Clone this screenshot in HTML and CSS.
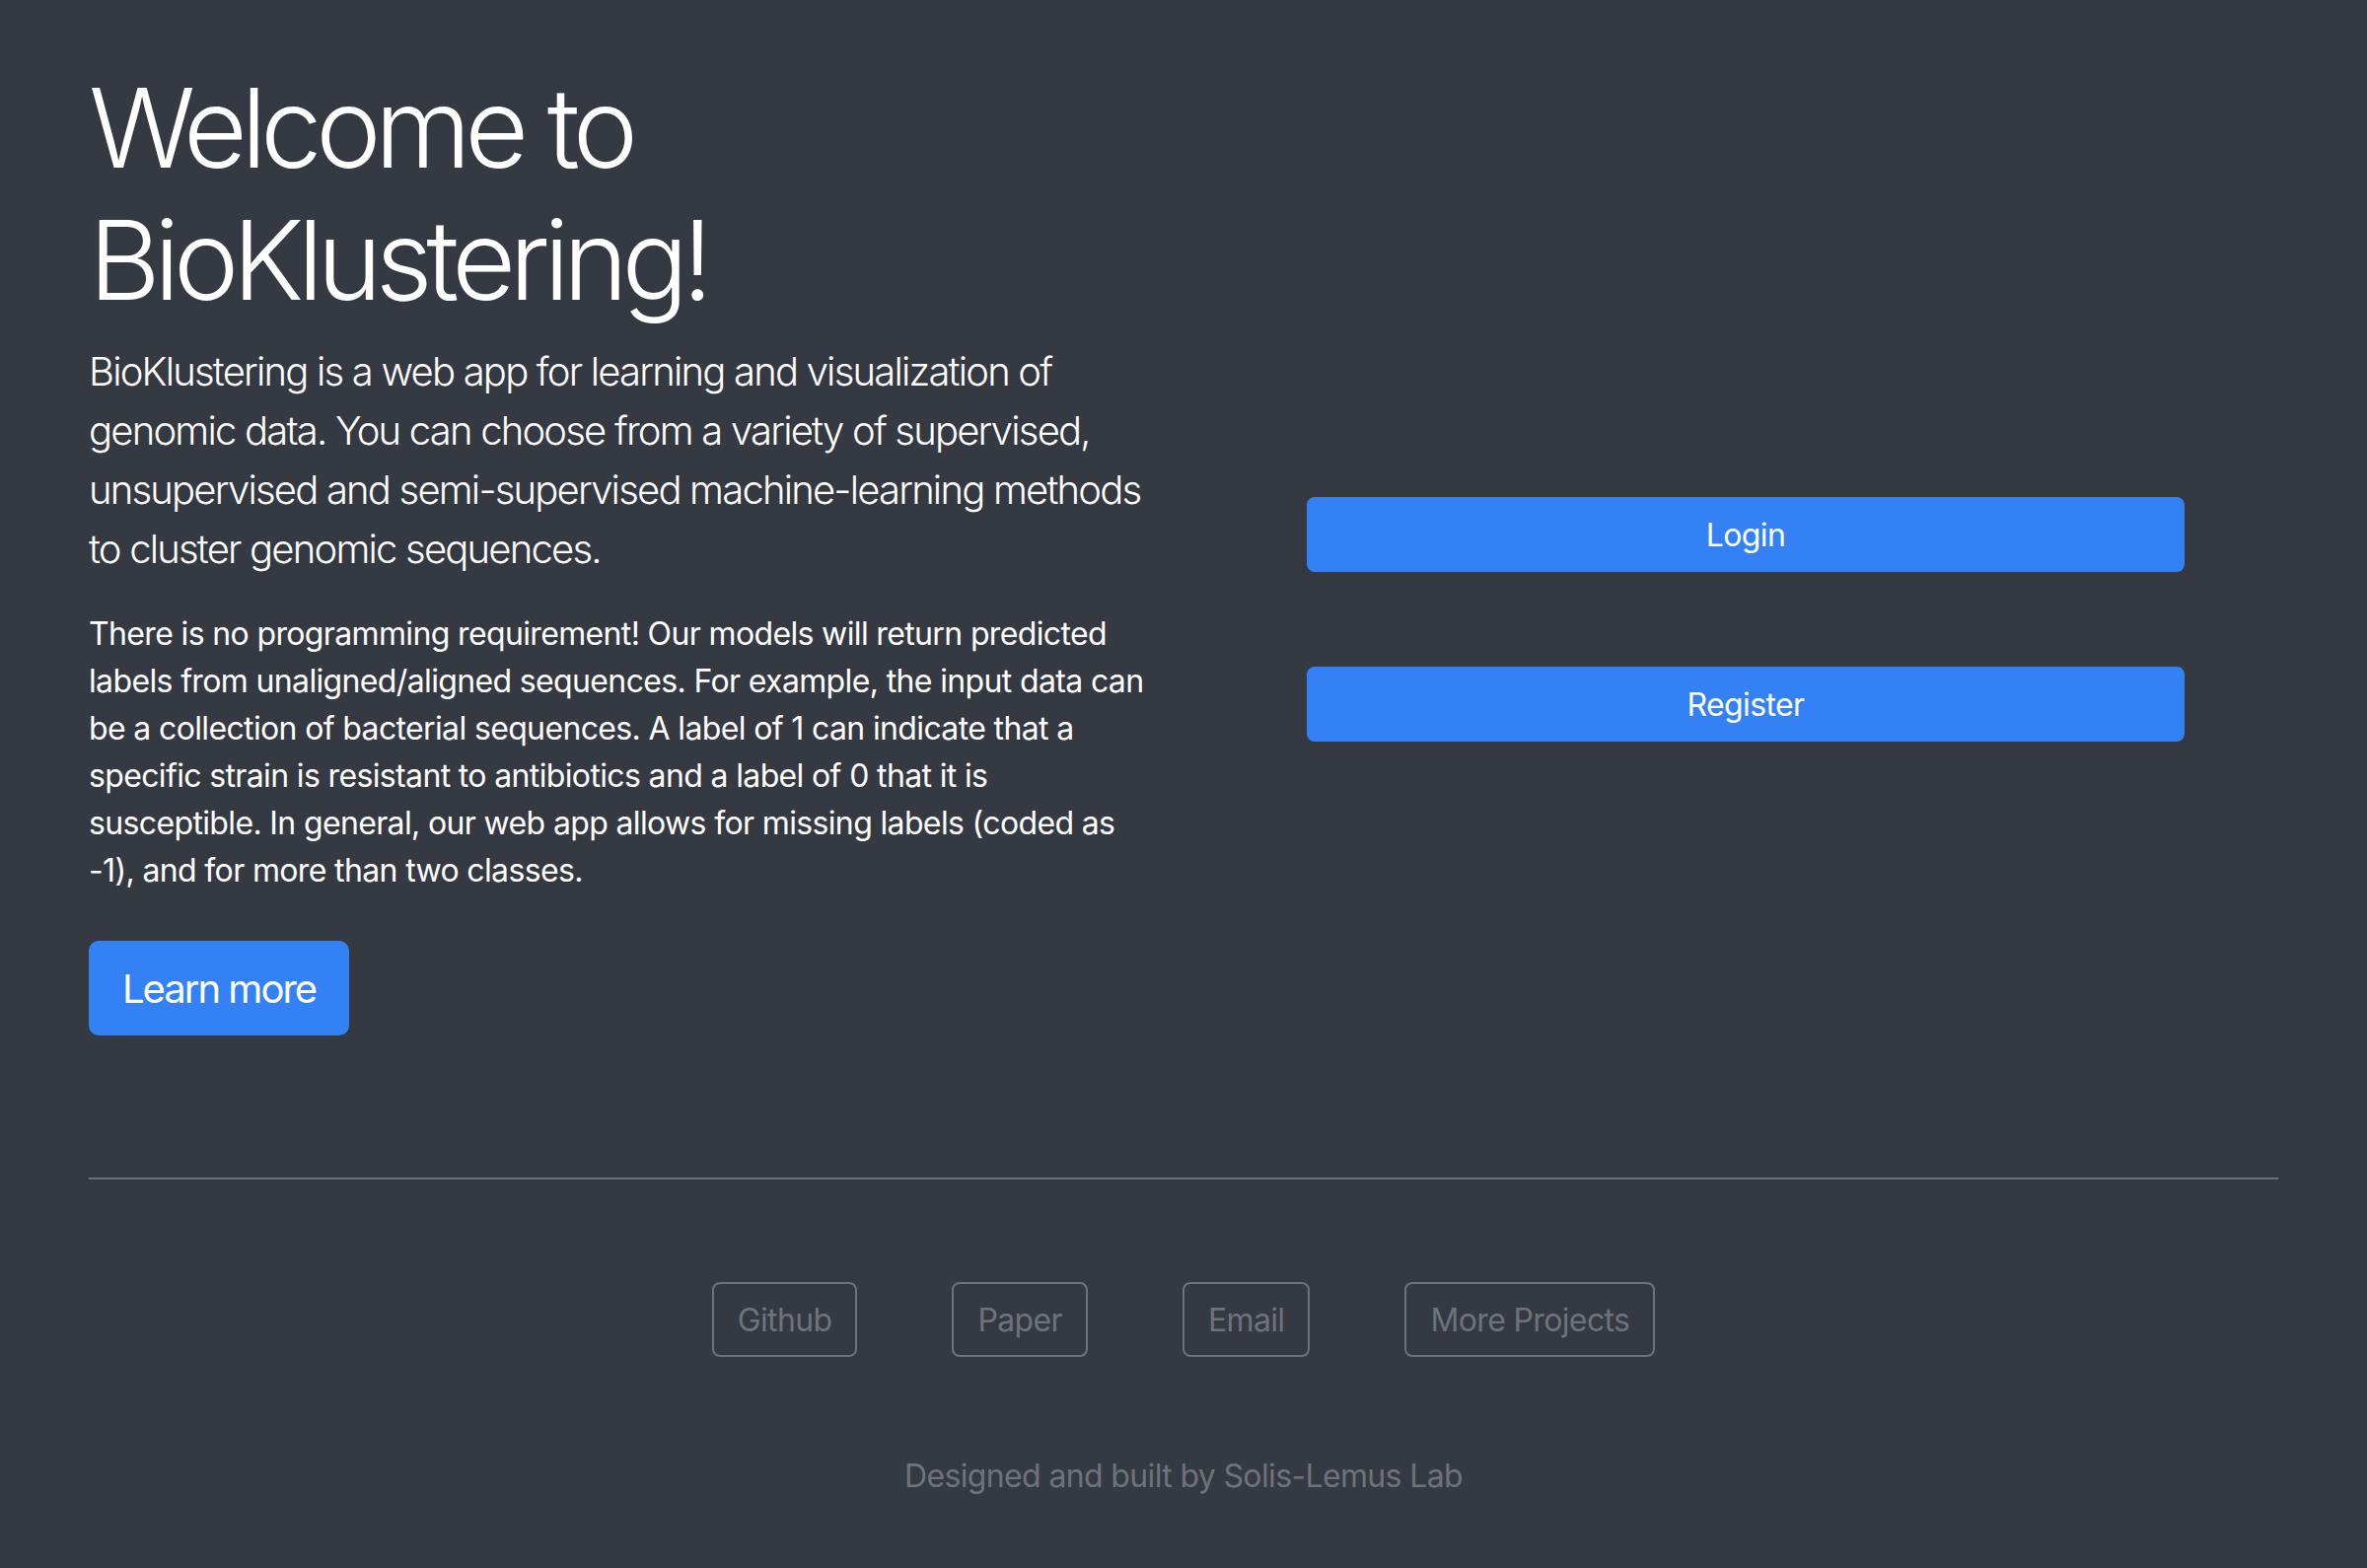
FILE: index.html
```html
<!DOCTYPE html>
<html lang="en">
<head>
<meta charset="utf-8">
<title>BioKlustering</title>
<link rel="stylesheet" href="styles.css">
</head>
<body>
<div class="container">
  <div class="hero">
    <div class="intro">
      <h1 class="display">Welcome to BioKlustering!</h1>
      <p class="lead">BioKlustering is a web app for learning and visualization of genomic data. You can choose from a variety of supervised, unsupervised and semi-supervised machine-learning methods to cluster genomic sequences.</p>
      <p class="body-text">There is no programming requirement! Our models will return predicted labels from unaligned/aligned sequences. For example, the input data can be a collection of bacterial sequences. A label of 1 can indicate that a specific strain is resistant to antibiotics and a label of 0 that it is susceptible. In general, our web app allows for missing labels (coded as -1), and for more than two classes.</p>
      <a class="btn btn-primary btn-lg" href="#">Learn more</a>
    </div>
    <div class="auth">
      <a class="btn btn-primary btn-block" href="#">Login</a>
      <a class="btn btn-primary btn-block" href="#">Register</a>
    </div>
  </div>
  <hr class="divider">
  <footer class="footer">
    <nav class="footer-links">
      <a class="btn btn-outline" href="#">Github</a>
      <a class="btn btn-outline" href="#">Paper</a>
      <a class="btn btn-outline" href="#">Email</a>
      <a class="btn btn-outline" href="#">More Projects</a>
    </nav>
    <p class="credit">Designed and built by Solis-Lemus Lab</p>
  </footer>
</div>
</body>
</html>
```
FILE: styles.css
```css
* { box-sizing: border-box; }
html, body {
  margin: 0;
  padding: 0;
  background: #353941;
}
body {
  font-family: Inter, "Noto Sans", "Liberation Sans", sans-serif;
  color: #ffffff;
  font-size: 32px;
  line-height: 48px;
  letter-spacing: -0.02em;
  min-height: 1590px;
}
.container {
  width: 2220px;
  margin: 0 auto;
  padding-top: 62px;
}
.hero {
  display: flex;
  gap: 60px;
}
.intro {
  width: 1080px;
  flex: none;
}
.display {
  font-size: 112px;
  font-weight: 300;
  line-height: 134.4px;
  margin: 0 0 16px;
  letter-spacing: -0.058em;
}
.lead {
  font-size: 40px;
  font-weight: 300;
  line-height: 60px;
  margin: 0 0 32px;
  letter-spacing: -0.045em;
}
.body-text {
  margin: 0 0 47px;
}
.btn {
  display: inline-block;
  text-decoration: none;
  text-align: center;
  border: 2px solid transparent;
  font-weight: 400;
  font-size: 32px;
  line-height: 48px;
  padding: 13px 24px 11px;
  border-radius: 8px;
}
.btn-primary {
  background: #3381f5;
  border-color: #3381f5;
  color: #ffffff;
}
.btn-lg {
  font-size: 40px;
  line-height: 60px;
  padding: 17px 32px 15px;
  border-radius: 10px;
  letter-spacing: -0.05em;
}
.auth {
  flex: 1;
  display: flex;
  flex-direction: column;
  align-items: center;
  gap: 96px;
  padding-top: 442px;
}
.btn-block {
  width: 890px;
}
.divider {
  margin: 144px 0 0;
  border: 0;
  border-top: 2px solid #6b6f77;
  height: 0;
}
.footer {
  display: flex;
  flex-direction: column;
  align-items: center;
  padding-top: 104px;
}
.footer-links {
  display: flex;
  gap: 96px;
  justify-content: center;
}
.btn-outline {
  color: #6e737b;
  border-color: #6e737b;
  background: transparent;
}
.credit {
  margin: 97px 0 0;
  color: #6e737b;
}
```
